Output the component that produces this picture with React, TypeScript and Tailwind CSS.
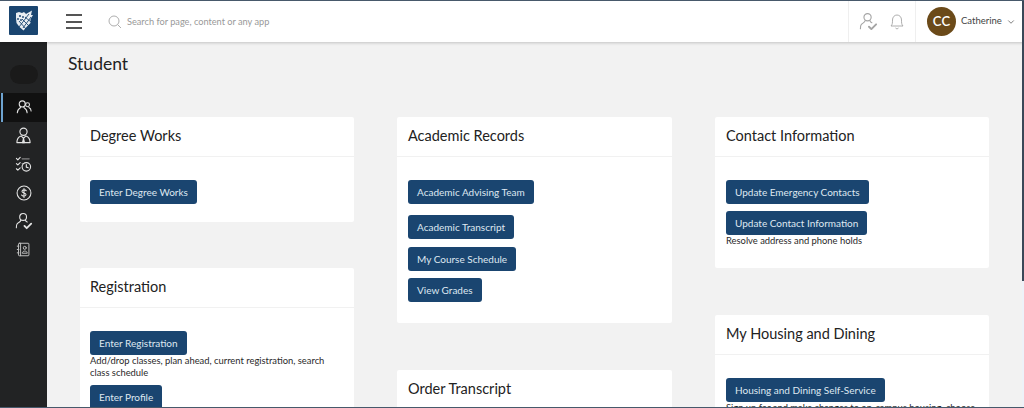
import { ChevronDown } from "lucide-react";
import type { ReactNode } from "react";

const font = { fontFamily: '"Lato", "Open Sans", sans-serif' };

function Btn({ children, className = "" }: { children: ReactNode; className?: string }) {
  return (
    <div className={`self-start h-[24px] flex items-center px-[9px] rounded-[3px] bg-[#1a4570] text-[#dfe8f0] text-[10px] whitespace-nowrap ${className}`}>
      {children}
    </div>
  );
}

function Card({ title, children, className = "", first = false }: { title: string; children: ReactNode; className?: string; first?: boolean }) {
  return (
    <div className={`bg-white rounded-[2px] flex flex-col ${className}`}>
      <div className={`h-[40px] shrink-0 flex items-center pb-[2px] border-b border-[#f1f1f1] text-[14.5px] text-[#222] ${first ? "px-[10px]" : "px-[11px]"}`}>{title}</div>
      <div className={`flex flex-col pt-[23px] ${first ? "px-[10px]" : "px-[11px]"}`}>{children}</div>
    </div>
  );
}

function Note({ children }: { children: ReactNode }) {
  return <div className="text-[9.4px] leading-[12px] text-[#2a2a2a]">{children}</div>;
}

const iconStroke = { fill: "none", stroke: "currentColor", strokeWidth: 1.2, strokeLinecap: "round", strokeLinejoin: "round" } as const;

function UserCheckIcon({ className = "" }: { className?: string }) {
  return (
    <svg viewBox="0 0 20 20" className={className} {...iconStroke}>
      <circle cx="9" cy="5.5" r="3.8" />
      <path d="M6.5 9 C6.3 11 4 11.5 2.5 13 C1.5 14 1.5 15.5 1.5 17.5" />
      <path d="M11.5 9 C11.7 10 12.5 10.7 13.5 11.2" />
      <path d="M10.5 15.5 L13 18 L18 13" strokeWidth="2" />
    </svg>
  );
}

function Logo() {
  return (
    <svg viewBox="0 0 29 29" className="w-[29px] h-[29px]">
      <rect width="29" height="29" rx="1" fill="#1a4570" />
      <path d="M7 7 L10 6 L13 7 L15 6 L17 8 L23 4.5 L22 9 L24 9 L21.5 13 L21.5 17 L18 20.5 L14.5 24.5 L10.5 21 L7.5 17 L7 12 Z" fill="#e8edf2" />
      <path d="M10 15 L17 23 M13 13 L20 20 M16 11 L22 16 M20 8 L10 21 M22 11 L14 22" stroke="#1a4570" strokeWidth="0.9" fill="none" />
      <circle cx="11" cy="10" r="1" fill="#1a4570" />
      <circle cx="14" cy="11" r="0.9" fill="#1a4570" />
      <circle cx="9" cy="13" r="0.9" fill="#1a4570" />
      <circle cx="12" cy="14" r="0.9" fill="#1a4570" />
    </svg>
  );
}

function SideIcon({ children, active = false }: { children: ReactNode; active?: boolean }) {
  return (
    <div className={`h-[28.5px] flex items-center justify-center relative ${active ? "bg-[#111]" : ""}`}>
      {active && <div className="absolute left-[1px] top-0 bottom-0 w-[2px] bg-[#6ea3d0]" />}
      {children}
    </div>
  );
}

export default function App() {
  return (
    <div style={font} className="relative w-[1024px] h-[408px] overflow-hidden flex flex-col bg-[#f2f2f2] border-t border-b border-[#47596b] text-[#222]">
      <div className="absolute right-0 top-0 w-[2px] h-[280px] bg-[#3a4858] z-20" />
      <div className="absolute right-0 top-[280px] bottom-0 w-[2px] bg-[#eef2f8] z-20" />
      <header className="h-[41px] shrink-0 flex items-stretch bg-white shadow-[0_1px_3px_rgba(0,0,0,0.2)] relative z-10">
        <div className="w-[47px] shrink-0 flex items-center justify-center pb-[2px]"><Logo /></div>
        <div className="w-[54px] shrink-0 flex items-center justify-center">
          <div className="flex flex-col gap-[4.5px]">
            <div className="w-[16px] h-[2px] bg-[#555]" />
            <div className="w-[16px] h-[2px] bg-[#555]" />
            <div className="w-[16px] h-[2px] bg-[#555]" />
          </div>
        </div>
        <div className="flex-1 flex items-center gap-[5px] pl-[7px]">
          <svg viewBox="0 0 14 14" className="w-[14px] h-[14px] text-[#a5a5a5]" fill="none" stroke="currentColor" strokeWidth="0.9">
            <circle cx="6" cy="6" r="5" />
            <path d="M9.7 9.7 L13 13" />
          </svg>
          <span className="text-[9.2px] text-[#999]">Search for page, content or any app</span>
        </div>
        <div className="w-[67px] shrink-0 flex items-center justify-center gap-[11px] pr-[1px] border-l border-[#efefef] text-[#a5a5a5]">
          <UserCheckIcon className="w-[19px] h-[19px]" />
          <svg viewBox="0 0 16 18" className="w-[16px] h-[19px]" fill="none" stroke="currentColor" strokeWidth="0.9">
            <path d="M2 13.5 C3.5 12 3.5 10 3.5 7.5 C3.5 4.5 5.5 2.5 8 2.5 C10.5 2.5 12.5 4.5 12.5 7.5 C12.5 10 12.5 12 14 13.5 Z" />
            <path d="M6.5 15.5 C7 16.5 9 16.5 9.5 15.5" />
          </svg>
        </div>
        <div className="w-[109px] shrink-0 flex items-center border-l border-[#efefef] pl-[11px]">
          <div className="w-[29px] h-[29px] rounded-full bg-[#6b4a19] flex items-center justify-center text-white text-[13px] font-semibold tracking-[0.3px]">CC</div>
          <span className="ml-[5px] text-[9.5px] text-[#444]">Catherine</span>
          <ChevronDown className="ml-[4px] w-[10px] h-[10px] text-[#666]" />
        </div>
      </header>
      <div className="flex-1 min-h-0 flex">
        <aside className="w-[47px] shrink-0 bg-[#222324] flex flex-col">
          <div className="h-[51px] shrink-0 flex items-end justify-center pb-[9px]">
            <div className="w-[28px] h-[19px] rounded-[10px] bg-[#1a1a1a]" />
          </div>
          <div className="text-[#e4e4e4] flex flex-col">
            <SideIcon active>
              <svg viewBox="0 0 18 18" className="w-[16px] h-[16px]" {...iconStroke}>
                <circle cx="7" cy="5.5" r="3.4" />
                <path d="M1.5 15.5 C1.5 12 3.5 10.5 5.2 9.5 M8.8 9.5 C10.5 10.5 12.5 12 12.5 15.5" />
                <circle cx="13" cy="6.5" r="2.2" />
                <path d="M14.5 9.5 C16 10.2 17 11.5 17 13.5" />
              </svg>
            </SideIcon>
            <SideIcon>
              <svg viewBox="0 0 18 18" className="w-[17px] h-[17px]" {...iconStroke}>
                <circle cx="9" cy="5" r="3.8" />
                <path d="M2 16.5 C2 12.5 3.5 10.5 6.5 9.5 L9 12 L11.5 9.5 C14.5 10.5 16 12.5 16 16.5 Z" />
                <path d="M9 12 L8 16.5 L10 16.5 Z" fill="currentColor" />
              </svg>
            </SideIcon>
            <SideIcon>
              <svg viewBox="0 0 18 18" className="w-[17px] h-[17px]" {...iconStroke}>
                <path d="M1.5 2.5 L3 4 L5.5 1.5 M1.5 8 L3 9.5 L5.5 7 M1.5 13.5 L3 15 L5.5 12.5" />
                <path d="M7.5 3 L15 3 M7.5 8 L9.5 8" opacity="0.5" />
                <circle cx="12" cy="11.5" r="4.5" />
                <path d="M12 9 L12 11.8 L14 12.5" />
              </svg>
            </SideIcon>
            <SideIcon>
              <svg viewBox="0 0 18 18" className="w-[16px] h-[16px]" {...iconStroke}>
                <circle cx="9" cy="9" r="7.8" />
                <path d="M11.5 6.5 C11 5.2 7 5 6.7 7 C6.5 9.5 11.5 8.5 11.3 11 C11 13 7 13 6.3 11.3 M9 4 L9 14" />
              </svg>
            </SideIcon>
            <SideIcon>
              <UserCheckIcon className="w-[18px] h-[18px]" />
            </SideIcon>
            <SideIcon>
              <svg viewBox="0 0 18 18" className="w-[15px] h-[15px] text-[#bdbdbd]" {...iconStroke}>
                <rect x="3" y="1.5" width="12.5" height="15" rx="1" />
                <path d="M5.5 1.5 L5.5 16.5 M1.5 5 L3.5 5 M1.5 9 L3.5 9 M1.5 13 L3.5 13" />
                <circle cx="10.5" cy="7" r="1.8" />
                <path d="M7.5 13 C7.5 10 13.5 10 13.5 13 Z" />
              </svg>
            </SideIcon>
          </div>
        </aside>
        <main className="flex-1 min-w-0 overflow-hidden pl-[21px]">
          <h1 className="mt-[12px] h-[20px] text-[17.5px] leading-[20px] text-[#222]">Student</h1>
          <div className="mt-[43px] ml-[12px] flex gap-[43px] items-start">
            <div className="w-[274px] flex flex-col gap-[46px]">
              <Card first title="Degree Works" className="h-[105px]">
                <Btn>Enter Degree Works</Btn>
              </Card>
              <Card first title="Registration" className="h-[220px]">
                <Btn>Enter Registration</Btn>
                <Note>Add/drop classes, plan ahead, current registration, search class schedule</Note>
                <Btn className="mt-[6px]">Enter Profile</Btn>
              </Card>
            </div>
            <div className="w-[275px] flex flex-col gap-[47px]">
              <Card title="Academic Records" className="h-[206px]">
                <Btn>Academic Advising Team</Btn>
                <Btn className="mt-[11px]">Academic Transcript</Btn>
                <Btn className="mt-[8px]">My Course Schedule</Btn>
                <Btn className="mt-[7px]">View Grades</Btn>
              </Card>
              <Card title="Order Transcript" className="h-[120px]">
                <Btn>Order Transcript</Btn>
              </Card>
            </div>
            <div className="w-[274px] flex flex-col gap-[47px]">
              <Card title="Contact Information" className="h-[151px]">
                <Btn>Update Emergency Contacts</Btn>
                <Btn className="mt-[7px]">Update Contact Information</Btn>
                <Note>Resolve address and phone holds</Note>
              </Card>
              <Card title="My Housing and Dining" className="h-[180px]">
                <Btn>Housing and Dining Self-Service</Btn>
                <Note>Sign up for and make changes to on-campus housing, choose</Note>
              </Card>
            </div>
          </div>
        </main>
      </div>
    </div>
  );
}
